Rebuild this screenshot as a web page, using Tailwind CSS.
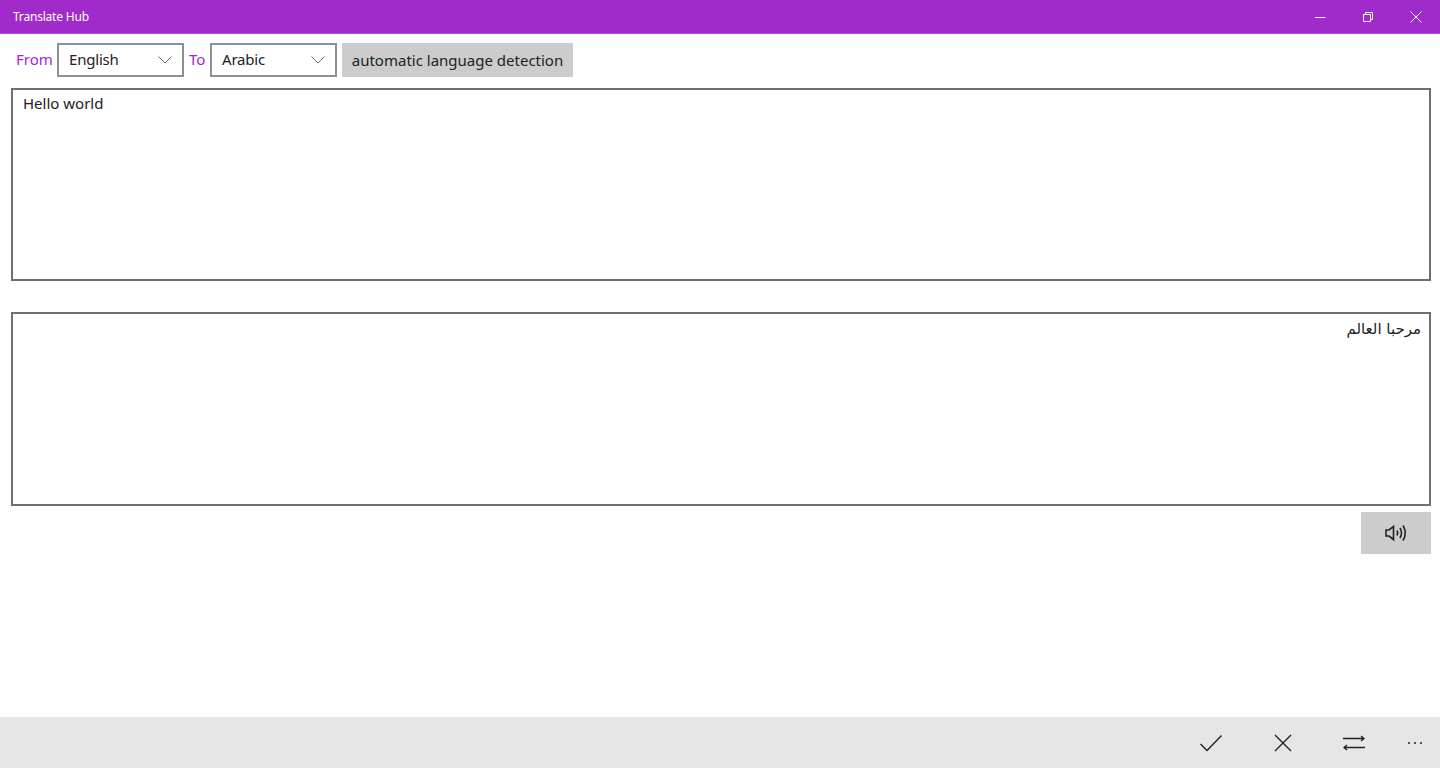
<!DOCTYPE html>
<html lang="en">
<head>
<meta charset="utf-8">
<title>Translate Hub</title>
<script src="https://cdn.jsdelivr.net/npm/@tailwindcss/browser@4"></script>
</head>
<body class="bg-white">
<div class="w-[1440px] h-[768px] flex flex-col overflow-hidden font-['Noto_Sans','DejaVu_Sans',sans-serif] text-[#222222]">
  <header class="h-[34px] shrink-0 bg-[#a12acb] border-b border-[#b04ad4] flex items-center justify-between text-white">
    <span class="pl-[13px] text-[12px] tracking-[-0.2px]">Translate Hub</span>
    <div class="flex items-center">
      <div class="w-[48px] h-[33px] flex items-center justify-center"><svg width="12" height="12" viewBox="0 0 12 12"><path d="M1 6.500h10.500" stroke="#fff" stroke-width="1" fill="none"/></svg></div>
      <div class="w-[48px] h-[33px] flex items-center justify-center"><svg width="12" height="12" viewBox="0 0 12 12" fill="none" stroke="#fff"><path d="M1.500 3.500h7v7h-7z"/><path d="M3.500 3.500v-2h7v7h-2"/></svg></div>
      <div class="w-[48px] h-[33px] flex items-center justify-center"><svg width="12" height="12" viewBox="0 0 12 12" fill="none" stroke="#fff"><path d="M.5.5l11 11M11.500.5l-11 11"/></svg></div>
    </div>
  </header>

  <div class="flex items-stretch h-[34px] mt-[9px] ml-[16px]">
    <span class="w-[41px] flex items-center pb-[2px] text-[15px] text-[#a12acb]">From</span>
    <div class="w-[127px] border-2 border-[#8f8f8f] flex items-center justify-between pl-[10px] pr-[10px] pb-[1px] text-[15px]">
      <span class="tracking-[-0.2px]">English</span>
      <svg width="14" height="8" viewBox="0 0 14 8" fill="none" stroke="#6b6b6b"><path d="M.5.5l6.500 6.500 6.500-6.500"/></svg>
    </div>
    <span class="w-[26px] pl-[5px] flex items-center pb-[2px] text-[15px] text-[#a12acb]">To</span>
    <div class="w-[127px] border-2 border-[#8f8f8f] flex items-center justify-between pl-[10px] pr-[10px] pb-[1px] text-[15px]">
      <span class="tracking-[-0.2px]">Arabic</span>
      <svg width="14" height="8" viewBox="0 0 14 8" fill="none" stroke="#6b6b6b"><path d="M.5.5l6.500 6.500 6.500-6.500"/></svg>
    </div>
    <button class="ml-[5px] w-[231px] bg-[#cccccc] text-[15px] text-center pt-[1px]">automatic language detection</button>
  </div>

  <div class="ml-[11px] mt-[11px] w-[1420px] h-[193px] border-2 border-[#6f6f6f] pl-[10px] pt-[2px] text-[15px] leading-[22px]">Hello world</div>
  <div dir="rtl" class="ml-[11px] mt-[31px] w-[1420px] h-[194px] border-2 border-[#6f6f6f] pr-[8px] pt-[2px] text-[15px] leading-[26px] font-['DejaVu_Sans',sans-serif]">مرحبا العالم</div>

  <div class="flex justify-end pr-[9px] mt-[6px]">
    <button class="w-[70px] h-[42px] bg-[#cccccc] flex items-center justify-center" aria-label="Speak">
      <svg width="22" height="18" viewBox="0 0 22 18" fill="none" stroke="#222" stroke-width="1.600"><path d="M1 6h3L8.500 2.500v13L4 12H1z"/><path d="M12 6.500q1.500 2.500 0 5"/><path d="M15 4q3 5 0 10"/><path d="M18 1.500q4.500 7.500 0 15"/></svg>
    </button>
  </div>

  <footer class="mt-auto h-[51px] bg-[#e6e6e6] flex items-center justify-end">
    <div class="flex items-center">
      <div class="w-[72px] flex justify-center"><svg width="24" height="18" viewBox="0 0 24 18" fill="none" stroke="#222" stroke-width="1.400"><path d="M1.500 10l6.500 6.500L22.500 1.500"/></svg></div>
      <div class="w-[71px] flex justify-center"><svg width="18" height="18" viewBox="0 0 18 18" fill="none" stroke="#222" stroke-width="1.400"><path d="M1 1l16 16M17 1L1 17"/></svg></div>
      <div class="w-[72px] flex justify-center"><svg width="22" height="18" viewBox="0 0 22 18" fill="none" stroke="#222" stroke-width="1.400"><path d="M0 4.500h20.500M18 2l3 2.500L18 7"/><path d="M22 13.500H1.500M4 11l-3 2.500L4 16"/></svg></div>
      <div class="w-[50px] flex justify-center"><svg width="16" height="4" viewBox="0 0 16 4" fill="#222"><circle cx="2" cy="2" r="1"/><circle cx="8" cy="2" r="1"/><circle cx="14" cy="2" r="1"/></svg></div>
    </div>
  </footer>
</div>
</body>
</html>
